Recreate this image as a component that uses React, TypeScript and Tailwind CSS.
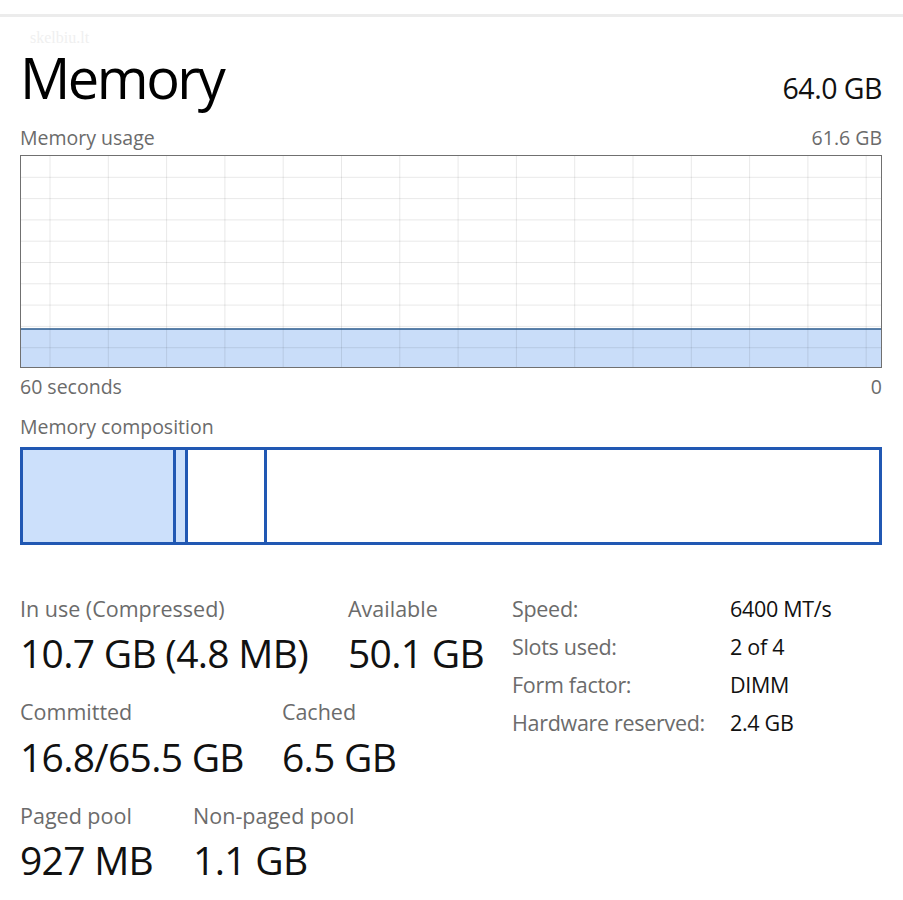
import React from 'react';

const FONT = { fontFamily: '"Open Sans", "Noto Sans", sans-serif' };

function UsageChart() {
  const w = 860;
  const h = 211;
  const cols: number[] = [];
  for (let x = 29; x < w; x += 58.3) cols.push(x);
  const rows: number[] = [];
  for (let i = 1; i < 10; i++) rows.push(i * 21.3);
  const fillTop = 173;

  return (
    <div className="border border-[#707070] h-[213px]">
      <svg width="100%" height="211" viewBox={`0 0 ${w} ${h}`} preserveAspectRatio="none" className="block">
        <rect x="0" y={fillTop} width={w} height={h - fillTop} fill="#c9ddf9" />
        {cols.map((x) => (
          <line key={`c${x}`} x1={x} y1="0" x2={x} y2={h} stroke="#000" strokeOpacity="0.09" strokeWidth="1" />
        ))}
        {rows.map((y) => (
          <line key={`r${y}`} x1="0" y1={y} x2={w} y2={y} stroke="#000" strokeOpacity="0.09" strokeWidth="1" />
        ))}
        <line x1="0" y1={fillTop} x2={w} y2={fillTop} stroke="#2a5a8c" strokeWidth="1.5" />
      </svg>
    </div>
  );
}

function CompositionBar() {
  return (
    <div className="flex h-[98px] border-[3px] border-[#2158b3]">
      <div className="w-[153px] bg-[#cce0fb] border-r-[3px] border-[#2158b3]" />
      <div className="w-[12px] bg-[#cce0fb] border-r-[3px] border-[#2158b3]" />
      <div className="w-[79px] bg-white border-r-[3px] border-[#2158b3]" />
      <div className="flex-1 bg-white" />
    </div>
  );
}

function Stat({ label, value }: { label: string; value: string }) {
  return (
    <div className="flex flex-col">
      <span className="text-[21.5px] leading-none text-[#6b6b6b]">{label}</span>
      <span className="mt-[14px] text-[39px] leading-none text-[#111] tracking-[-0.7px]">{value}</span>
    </div>
  );
}

const DETAILS = [
  ['Speed:', '6400 MT/s'],
  ['Slots used:', '2 of 4'],
  ['Form factor:', 'DIMM'],
  ['Hardware reserved:', '2.4 GB'],
];

export default function App() {
  return (
    <div className="min-h-[900px] bg-white" style={FONT}>
      <div className="mt-[14px] h-[3px] bg-[#ececec]" />

      <div className="px-[20px] pr-[21px]">
        <div className="relative mt-[32px] flex items-baseline justify-between">
          <span
            className="absolute left-[10px] top-[-19px] text-[16px] leading-none text-[#f0f0f0] select-none"
            style={{ fontFamily: '"Liberation Serif", serif' }}
          >
            skelbiu.lt
          </span>
          <h1 className="relative text-[56px] leading-none text-black tracking-[-2.5px]">Memory</h1>
          <span className="text-[28.5px] leading-none text-[#111] tracking-[-0.5px]">64.0 GB</span>
        </div>

        <div className="mt-[23px] flex justify-between text-[19.5px] leading-none text-[#6b6b6b]">
          <span>Memory usage</span>
          <span>61.6 GB</span>
        </div>
        <div className="mt-[7px]">
          <UsageChart />
        </div>
        <div className="mt-[9px] flex justify-between text-[19.5px] leading-none text-[#6b6b6b]">
          <span>60 seconds</span>
          <span>0</span>
        </div>

        <div className="mt-[21px] text-[19.5px] leading-none text-[#6b6b6b]">Memory composition</div>
        <div className="mt-[10px]">
          <CompositionBar />
        </div>

        <div className="mt-[45px] flex items-start">
          <div className="w-[492px] pt-[8px] flex flex-col gap-[29px]">
            <div className="flex gap-[40px]">
              <Stat label="In use (Compressed)" value="10.7 GB (4.8 MB)" />
              <Stat label="Available" value="50.1 GB" />
            </div>
            <div className="flex gap-[38px]">
              <Stat label="Committed" value="16.8/65.5 GB" />
              <Stat label="Cached" value="6.5 GB" />
            </div>
            <div className="flex gap-[40px]">
              <Stat label="Paged pool" value="927 MB" />
              <Stat label="Non-paged pool" value="1.1 GB" />
            </div>
          </div>

          <div className="grid grid-cols-[218px_auto] content-start text-[21.5px] leading-[38.3px] tracking-[-0.3px]">
            {DETAILS.map(([k, v]) => (
              <React.Fragment key={k}>
                <span className="text-[#6b6b6b]">{k}</span>
                <span className="text-[#111]">{v}</span>
              </React.Fragment>
            ))}
          </div>
        </div>
      </div>
    </div>
  );
}
